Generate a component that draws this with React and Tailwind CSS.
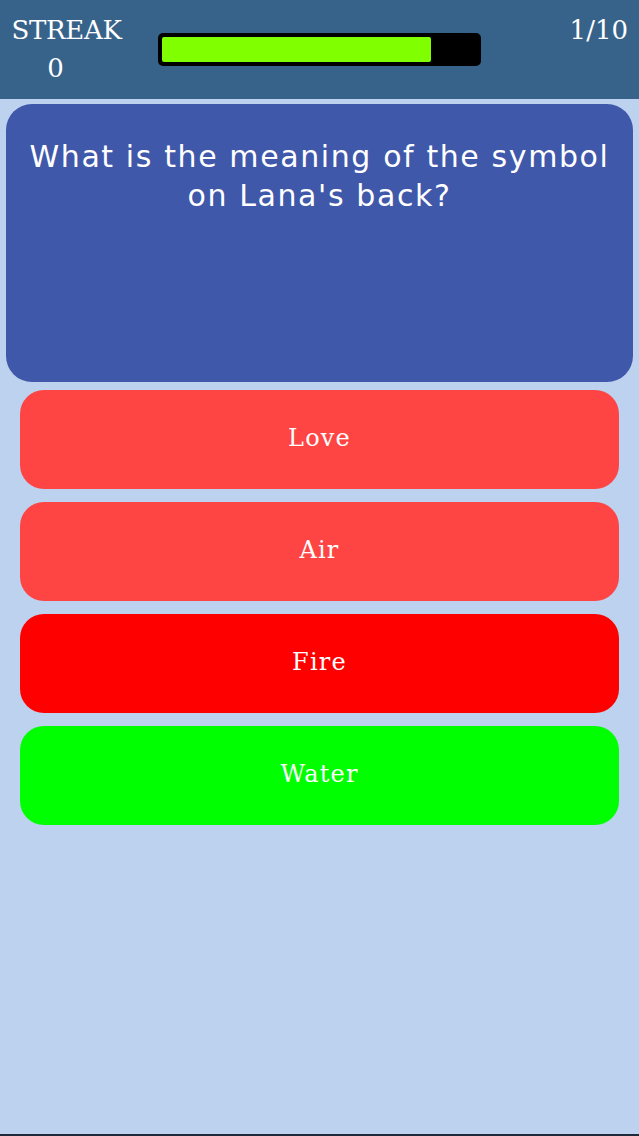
import React from 'react';

const answers = [
    { label: 'Love', color: 'bg-[#ff4444]' },
    { label: 'Air', color: 'bg-[#ff4444]' },
    { label: 'Fire', color: 'bg-[#ff0000]' },
    { label: 'Water', color: 'bg-[#00ff00]' },
];

export default function App() {
    const progress = 85.5; // percent of bar filled

    return (
        <div className="w-[639px] h-[1136px] flex flex-col bg-[#bdd2ee] overflow-hidden">
            {/* top bar */}
            <div className="h-[99px] bg-[#37638a] flex items-start justify-between px-[11px] pt-[13px] font-[family-name:'DejaVu_Serif',serif] text-white">
                <div className="flex flex-col items-center w-[111px]">
                    <span className="text-[26px] leading-[35px] tracking-[-0.3px]">STREAK</span>
                    <span className="text-[26px] leading-[40px] mr-[22px]">0</span>
                </div>
                <div className="mt-[20px] ml-[36px] w-[323px] h-[33px] bg-black rounded-[5px] p-[4px]">
                    <div className="h-full bg-[#80ff00] rounded-[2px]" style={{ width: `${progress}%` }} />
                </div>
                <div className="flex-1 text-right text-[26px] leading-[35px]">1/10</div>
            </div>

            {/* question */}
            <div className="mx-[6px] mt-[5px] h-[278px] bg-[#3f58aa] rounded-[26px] px-[16px] pt-[33px]">
                <p className="text-center text-white text-[30px] leading-[39px] tracking-[1.6px] font-[family-name:'DejaVu_Sans',sans-serif]">
                    What is the meaning of the symbol on Lana's back?
                </p>
            </div>

            {/* answers */}
            <div className="flex flex-col gap-[13px] mx-[20px] mt-[8px]">
                {answers.map((a) => (
                    <div
                        key={a.label}
                        className={`h-[99px] ${a.color} rounded-[24px] flex items-center justify-center pb-[3px] text-white text-[24px] tracking-[1.2px] font-[family-name:'DejaVu_Serif',serif]`}
                    >
                        {a.label}
                    </div>
                ))}
            </div>

            <div className="flex-1" />
            <div className="h-[2px] bg-[#1e2a3a]" />
        </div>
    );
}
